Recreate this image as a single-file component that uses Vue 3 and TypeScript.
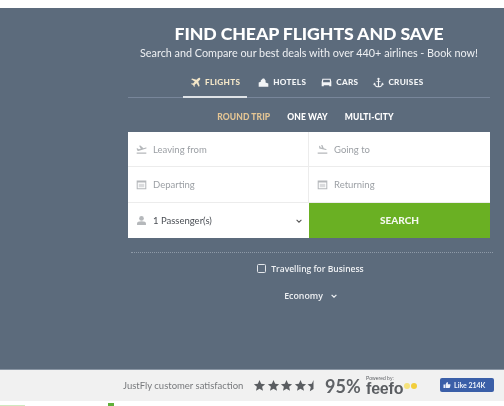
<template>
  <div class="page">
    <div class="top-strip"></div>
    <section class="hero">
      <div class="panel">
        <h1 class="title">FIND CHEAP FLIGHTS AND SAVE</h1>
        <p class="subtitle">Search and Compare our best deals with over 440+ airlines - Book now!</p>

        <nav class="tabs">
          <a v-for="tab in tabs" :key="tab.label" class="tab" :class="{ active: tab.active }">
            <svg class="tab-icon" viewBox="0 0 16 16" fill="currentColor" v-html="tab.icon"></svg>
            {{ tab.label }}
          </a>
        </nav>

        <div class="trip-types">
          <span v-for="trip in trips" :key="trip" class="trip" :class="{ selected: trip === 'ROUND TRIP' }">{{ trip }}</span>
        </div>

        <form class="search-form" @submit.prevent>
          <div v-for="field in fields" :key="field.label" class="field">
            <svg class="field-icon" viewBox="0 0 16 16" fill="currentColor" v-html="field.icon"></svg>
            <span>{{ field.label }}</span>
          </div>
          <div class="field passengers">
            <svg class="field-icon" viewBox="0 0 16 16" fill="currentColor">
              <circle cx="8" cy="5" r="3.4" />
              <path d="M1.500 14.500v-2.500c0-1.700 2.300-2.800 6.500-2.800s6.500 1.100 6.500 2.800v2.500z" />
            </svg>
            <span>1 Passenger(s)</span>
            <svg class="caret" viewBox="0 0 10 6" fill="none" stroke="currentColor" stroke-width="1.700">
              <path d="M1 1l4 4 4-4" />
            </svg>
          </div>
          <button class="search-btn" type="submit">SEARCH</button>
        </form>

        <div class="divider"></div>

        <label class="business">
          <span class="checkbox"></span>
          Travelling for Business
        </label>

        <div class="cabin">
          Economy
          <svg class="cabin-caret" viewBox="0 0 10 6" fill="none" stroke="currentColor" stroke-width="2">
            <path d="M1 1l4 4 4-4" />
          </svg>
        </div>
      </div>
    </section>

    <footer class="rating-bar">
      <span class="rating-label">JustFly customer satisfaction</span>
      <span class="stars">
        <svg v-for="n in 4" :key="n" class="star" viewBox="0 0 24 24" fill="currentColor">
          <path :d="starPath" />
        </svg>
        <svg class="star half" viewBox="0 0 12 24" fill="currentColor">
          <path d="M12 2v16.500l-6.800 4 1.800-7.700-6-5.200 7.900-.7z" />
        </svg>
      </span>
      <span class="percent">95%</span>
      <span class="feefo">
        <small>Powered by:</small>
        <span class="feefo-word">feefo<i class="dot"></i><i class="dot second"></i></span>
      </span>
      <span class="like">
        <svg viewBox="0 0 16 16" fill="currentColor">
          <path d="M1 7h3v7H1zM5 7l3-5c1.300 0 2 .8 2 2l-.5 2.500H14c.8 0 1.200.7 1 1.500l-1.200 5c-.2.6-.6 1-1.300 1H5z" />
        </svg>
        Like 214K
      </span>
    </footer>
    <div class="bottom-strip">
      <i class="peek-a"></i>
      <i class="peek-b"></i>
    </div>
  </div>
</template>

<script setup lang="ts">
const planeUp =
  '<path d="M1 12.500h14v1.500H1zM2 9.800.8 6.500l1.500-.4 1.700 1.600 3-.8L4.500 2.500l1.900-.5 4.500 4 3.300-.9c1.100-.2 1.700 1 .7 1.500L3.500 10.300z"/>'
const planeDown =
  '<path d="M1 12.500h14v1.500H1zM6 1.500h1.800l2 4.800 3.300.9c1.100.3 1 1.800-.2 1.500L3.300 6.400l-.3-3.700 1.400.3.900 2 2 .5z"/>'
const calendar =
  '<path fill-rule="evenodd" d="M1 2h14v13H1zM2.500 5v8.500h11V5z"/><path d="M4 7h8v5H4z" opacity=".5"/>'

const tabs = [
  {
    label: 'FLIGHTS',
    active: true,
    icon: '<path d="M14.500 1.500c-.8-.8-2-.4-2.700.3L9.500 4 3 2 1.700 3.300 7 6.500 4.500 9.300 2.500 9 1.500 10l3 1.500L6 14.500l1-1-.3-2L9.500 9l3.200 5.300L14 13l-2-6.500 2.200-2.300c.7-.7 1.100-1.900.3-2.700z"/>'
  },
  {
    label: 'HOTELS',
    icon: '<path d="M1 14V8l3-1V5l3-3h2l2 3v3l4 1.500V14z"/>'
  },
  {
    label: 'CARS',
    icon: '<path fill-rule="evenodd" d="M1 7l1-4.500h12L15 7v6.500h-3V12H4v1.500H1zM3.300 4 3 7.500h10L12.700 4z"/>'
  },
  {
    label: 'CRUISES',
    icon: '<path d="M8 1a1.700 1.700 0 0 1 .8 3.200V6H11v1.300H8.800v6c2-.2 3.400-1.200 4-2.500l-1.300-.3L14.500 8l1 3.500-1.200-.4C13.400 13.300 11 15 8 15s-5.400-1.700-6.300-3.900l-1.200.4 1-3.500 3 2.500-1.300.3c.6 1.300 2 2.300 4 2.500v-6H5V6h2.200V4.200A1.700 1.700 0 0 1 8 1z"/>'
  }
]

const trips = ['ROUND TRIP', 'ONE WAY', 'MULTI-CITY']

const fields = [
  { label: 'Leaving from', icon: planeUp },
  { label: 'Going to', icon: planeDown },
  { label: 'Departing', icon: calendar },
  { label: 'Returning', icon: calendar }
]

const starPath = 'M12 2l3 6.800 7.400.7-5.600 4.900 1.700 7.300-6.500-3.900-6.500 3.900 1.700-7.300L1.600 9.500 9 8.800z'
</script>

<style>
html,
body {
  margin: 0;
  background: #fff;
  overflow: hidden;
}
</style>

<style scoped>
.page {
  width: 504px;
  height: 406px;
  display: flex;
  flex-direction: column;
  filter: blur(0.55px);
  font-family: Lato, "Liberation Sans", sans-serif;
}

.top-strip {
  height: 8px;
  background: #fff;
}

.hero {
  height: 362px;
  box-sizing: border-box;
  background: #5c6b7c;
  border-bottom: 1px solid #8995a3;
  color: #fff;
}

.panel {
  width: 362px;
  margin-left: 128px;
  display: flex;
  flex-direction: column;
  align-items: center;
}

.title {
  margin: 16px 0 0;
  font-size: 17.700px;
  line-height: 20px;
  font-weight: 900;
  letter-spacing: -0.1px;
  white-space: nowrap;
}

.subtitle {
  margin: 1px 0 0;
  font-size: 10.800px;
  line-height: 15px;
  white-space: nowrap;
  color: #eef0f3;
}

.tabs {
  align-self: stretch;
  display: flex;
  margin-top: 7px;
  padding-left: 62px;
  height: 30px;
  border-bottom: 1px solid #78869a;
}

.tab {
  display: flex;
  align-items: center;
  gap: 4px;
  height: 30px;
  margin-right: 15px;
  font-size: 8.200px;
  font-weight: 900;
  letter-spacing: 0.3px;
  color: #f2f4f6;
}

.tab.active {
  position: relative;
  color: #f3e6c8;
  padding-right: 7px;
  margin-right: 11px;
}

.tab.active::after {
  content: "";
  position: absolute;
  left: -7px;
  right: 0;
  bottom: -1px;
  height: 2px;
  background: #dfe3e7;
}

.tab-icon {
  width: 11px;
  height: 11px;
  flex: none;
}

.trip-types {
  display: flex;
  gap: 17px;
  margin: 12px 0 0 -7px;
  font-size: 8.500px;
  font-weight: 900;
  line-height: 14px;
  letter-spacing: 0.1px;
}

.trip.selected {
  color: #e4c594;
}

.search-form {
  align-self: stretch;
  margin-top: 8px;
  display: grid;
  grid-template-columns: 181px 181px;
  grid-auto-rows: 35.330px;
  background: #fff;
}

.field {
  display: flex;
  align-items: center;
  gap: 6px;
  padding-left: 8px;
  font-size: 9.500px;
  color: #9b9fa4;
  box-sizing: border-box;
  border-bottom: 1px solid #ececec;
}

.field:nth-child(odd) {
  border-right: 1px solid #ececec;
}

.field-icon {
  width: 11px;
  height: 11px;
  flex: none;
  color: #b5b8bb;
}

.field.passengers {
  position: relative;
  color: #4b4f55;
  border-bottom: 0;
  border-right: 0;
}

.caret {
  position: absolute;
  right: 7px;
  top: 16px;
  width: 6px;
  height: 4px;
  color: #555;
}

.search-btn {
  border: 0;
  padding: 0;
  background: #6ab023;
  color: #f4f8ee;
  font-family: Lato, "Liberation Sans", sans-serif;
  font-size: 10px;
  font-weight: 900;
}

.divider {
  align-self: stretch;
  margin: 14px -3px 0 3px;
  border-top: 1px dotted #8e9aa8;
}

.business {
  display: flex;
  align-items: center;
  gap: 5px;
  margin: 9px 0 0 3px;
  font-family: "Open Sans", "Noto Sans", sans-serif;
  font-size: 8.500px;
  font-weight: 600;
  line-height: 14px;
  color: #eef0f3;
}

.checkbox {
  width: 7px;
  height: 7px;
  border: 1px solid #e3e6ea;
  border-radius: 1.500px;
}

.cabin {
  display: flex;
  align-items: center;
  gap: 8px;
  margin: 13px 0 0 3px;
  font-family: "Open Sans", "Noto Sans", sans-serif;
  font-size: 8.800px;
  font-weight: 600;
  line-height: 14px;
  color: #eef0f3;
}

.cabin-caret {
  width: 6px;
  height: 4px;
}

.rating-bar {
  height: 31px;
  display: flex;
  align-items: center;
  padding-left: 123px;
  background: #f1f1f1;
}

.rating-label {
  width: 130px;
  font-size: 9.500px;
  color: #77797c;
  white-space: nowrap;
}

.stars {
  display: flex;
  align-items: center;
  gap: 0.500px;
  width: 72px;
  color: #5a5d61;
}

.star {
  width: 13px;
  height: 13px;
}

.star.half {
  width: 6.500px;
}

.percent {
  width: 41px;
  font-size: 18px;
  font-weight: 700;
  color: #5f6266;
}

.feefo {
  width: 74px;
  display: flex;
  flex-direction: column;
  color: #5a5d61;
  font-family: "Liberation Sans", sans-serif;
}

.feefo small {
  font-size: 5px;
  line-height: 6px;
}

.feefo-word {
  display: flex;
  align-items: flex-start;
  font-size: 16px;
  line-height: 15px;
  font-weight: 700;
  letter-spacing: -0.2px;
}

.dot {
  width: 6px;
  height: 6px;
  margin: 2px 0 0 1px;
  border-radius: 50%;
  background: #f5e27c;
}

.dot.second {
  background: #f2ce3c;
}

.like {
  display: flex;
  align-items: center;
  gap: 3px;
  width: 54px;
  height: 14px;
  margin-top: -1px;
  box-sizing: border-box;
  padding-left: 3px;
  border-radius: 2px;
  background: #3b5fa8;
  color: #eef2fa;
  font-size: 7px;
  font-weight: 700;
  white-space: nowrap;
}

.like svg {
  width: 8px;
  height: 8px;
}

.bottom-strip {
  position: relative;
  flex: 1;
  background: #fff;
}

.peek-a {
  position: absolute;
  left: 0;
  top: 4px;
  width: 25px;
  height: 1px;
  background: #cfe8c0;
}

.peek-b {
  position: absolute;
  left: 108px;
  top: 2px;
  width: 6px;
  height: 3px;
  background: #5fb13a;
}
</style>
